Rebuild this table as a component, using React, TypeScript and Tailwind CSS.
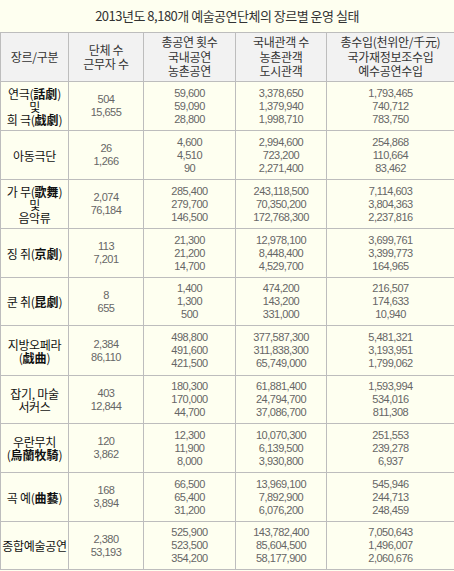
import React from "react";

// 2013년도 예술공연단체 장르별 운영 실태 표

type Row = {
  genre: React.ReactNode[];
  groups: string[];
  shows: string[];
  audience: string[];
  income: string[];
  h: string;
};

const H = ({ children }: { children: React.ReactNode }) => (
  <span className="font-bold tracking-normal">{children}</span>
);

const ROWS: Row[] = [
  {
    genre: [<>연극(<H>話劇</H>)</>, "및", <>희 극(<H>戱劇</H>)</>],
    groups: ["504", "15,655"],
    shows: ["59,600", "59,090", "28,800"],
    audience: ["3,378,650", "1,379,940", "1,998,710"],
    income: ["1,793,465", "740,712", "783,750"],
    h: "h-[49px]",
  },
  {
    genre: ["아동극단"],
    groups: ["26", "1,266"],
    shows: ["4,600", "4,510", "90"],
    audience: ["2,994,600", "723,200", "2,271,400"],
    income: ["254,868", "110,664", "83,462"],
    h: "h-[49px]",
  },
  {
    genre: [<>가 무(<H>歌舞</H>)</>, "및", "음악류"],
    groups: ["2,074", "76,184"],
    shows: ["285,400", "279,700", "146,500"],
    audience: ["243,118,500", "70,350,200", "172,768,300"],
    income: ["7,114,603", "3,804,363", "2,237,816"],
    h: "h-[49px]",
  },
  {
    genre: [<>징 쥐(<H>京劇</H>)</>],
    groups: ["113", "7,201"],
    shows: ["21,300", "21,200", "14,700"],
    audience: ["12,978,100", "8,448,400", "4,529,700"],
    income: ["3,699,761", "3,399,773", "164,965"],
    h: "h-[49px]",
  },
  {
    genre: [<>쿤 취(<H>昆劇</H>)</>],
    groups: ["8", "655"],
    shows: ["1,400", "1,300", "500"],
    audience: ["474,200", "143,200", "331,000"],
    income: ["216,507", "174,633", "10,940"],
    h: "h-[48px]",
  },
  {
    genre: ["지방오페라", <>(<H>戱曲</H>)</>],
    groups: ["2,384", "86,110"],
    shows: ["498,800", "491,600", "421,500"],
    audience: ["377,587,300", "311,838,300", "65,749,000"],
    income: ["5,481,321", "3,193,951", "1,799,062"],
    h: "h-[50px]",
  },
  {
    genre: ["잡기, 마술", "서커스"],
    groups: ["403", "12,844"],
    shows: ["180,300", "170,000", "44,700"],
    audience: ["61,881,400", "24,794,700", "37,086,700"],
    income: ["1,593,994", "534,016", "811,308"],
    h: "h-[48px]",
  },
  {
    genre: ["우란무치", <>(<H>烏蘭牧騎</H>)</>],
    groups: ["120", "3,862"],
    shows: ["12,300", "11,900", "8,000"],
    audience: ["10,070,300", "6,139,500", "3,930,800"],
    income: ["251,553", "239,278", "6,937"],
    h: "h-[49px]",
  },
  {
    genre: [<>곡 예(<H>曲藝</H>)</>],
    groups: ["168", "3,894"],
    shows: ["66,500", "65,400", "31,200"],
    audience: ["13,969,100", "7,892,900", "6,076,200"],
    income: ["545,946", "244,713", "248,459"],
    h: "h-[49px]",
  },
  {
    genre: ["종합예술공연"],
    groups: ["2,380", "53,193"],
    shows: ["525,900", "523,500", "354,200"],
    audience: ["143,782,400", "85,604,500", "58,177,900"],
    income: ["7,050,643", "1,496,007", "2,060,676"],
    h: "h-[48px]",
  },
];

const HEADERS = [
  ["장르/구분"],
  ["단체 수", "근무자 수"],
  ["총공연 횟수", "국내공연", "농촌공연"],
  ["국내관객 수", "농촌관객", "도시관객"],
  ["총수입(천위안/千元)", "국가재정보조수입", "예수공연수입"],
];

const KR = "font-['Noto_Sans_CJK_KR','Noto_Sans',sans-serif]";
const NUM = "font-['Liberation_Sans','Noto_Sans_CJK_KR',sans-serif]";

function Lines({ items }: { items: React.ReactNode[] }) {
  return (
    <div className="flex flex-col items-center">
      {items.map((t, i) => (
        <span key={i} className="whitespace-nowrap">
          {t}
        </span>
      ))}
    </div>
  );
}

export default function App() {
  return (
    <div className={`w-[454px] h-[571px] bg-[#fefff0] ${KR}`}>
      <div className="h-[32px] flex items-center justify-center text-[13px] tracking-[-0.5px] text-[#333]">
        2013년도 8,180개 예술공연단체의 장르별 운영 실태
      </div>
      <table className="w-[454px] table-fixed border-collapse">
        <colgroup>
          <col className="w-[68px]" />
          <col className="w-[75px]" />
          <col className="w-[92px]" />
          <col className="w-[91px]" />
          <col className="w-[128px]" />
        </colgroup>
        <thead>
          <tr className="h-[49px] bg-[#f2f2f2]">
            {HEADERS.map((h, i) => (
              <th
                key={i}
                className="border border-[#bdbdbd] p-0 align-middle font-normal text-[12px] leading-[14.5px] tracking-[-0.3px] text-[#333]"
              >
                <Lines items={h} />
              </th>
            ))}
          </tr>
        </thead>
        <tbody>
          {ROWS.map((r, i) => (
            <tr key={i} className={r.h}>
              <td className="border border-[#bdbdbd] p-0 align-middle text-center text-[12px] leading-[13px] tracking-[-0.3px] text-[#111]">
                <Lines items={r.genre} />
              </td>
              {[r.groups, r.shows, r.audience, r.income].map((col, j) => (
                <td
                  key={j}
                  className={`border border-[#bdbdbd] p-0 align-middle text-center text-[11px] leading-[13px] tracking-[-0.5px] text-[#666] ${NUM}`}
                >
                  <Lines items={col} />
                </td>
              ))}
            </tr>
          ))}
        </tbody>
      </table>
    </div>
  );
}
